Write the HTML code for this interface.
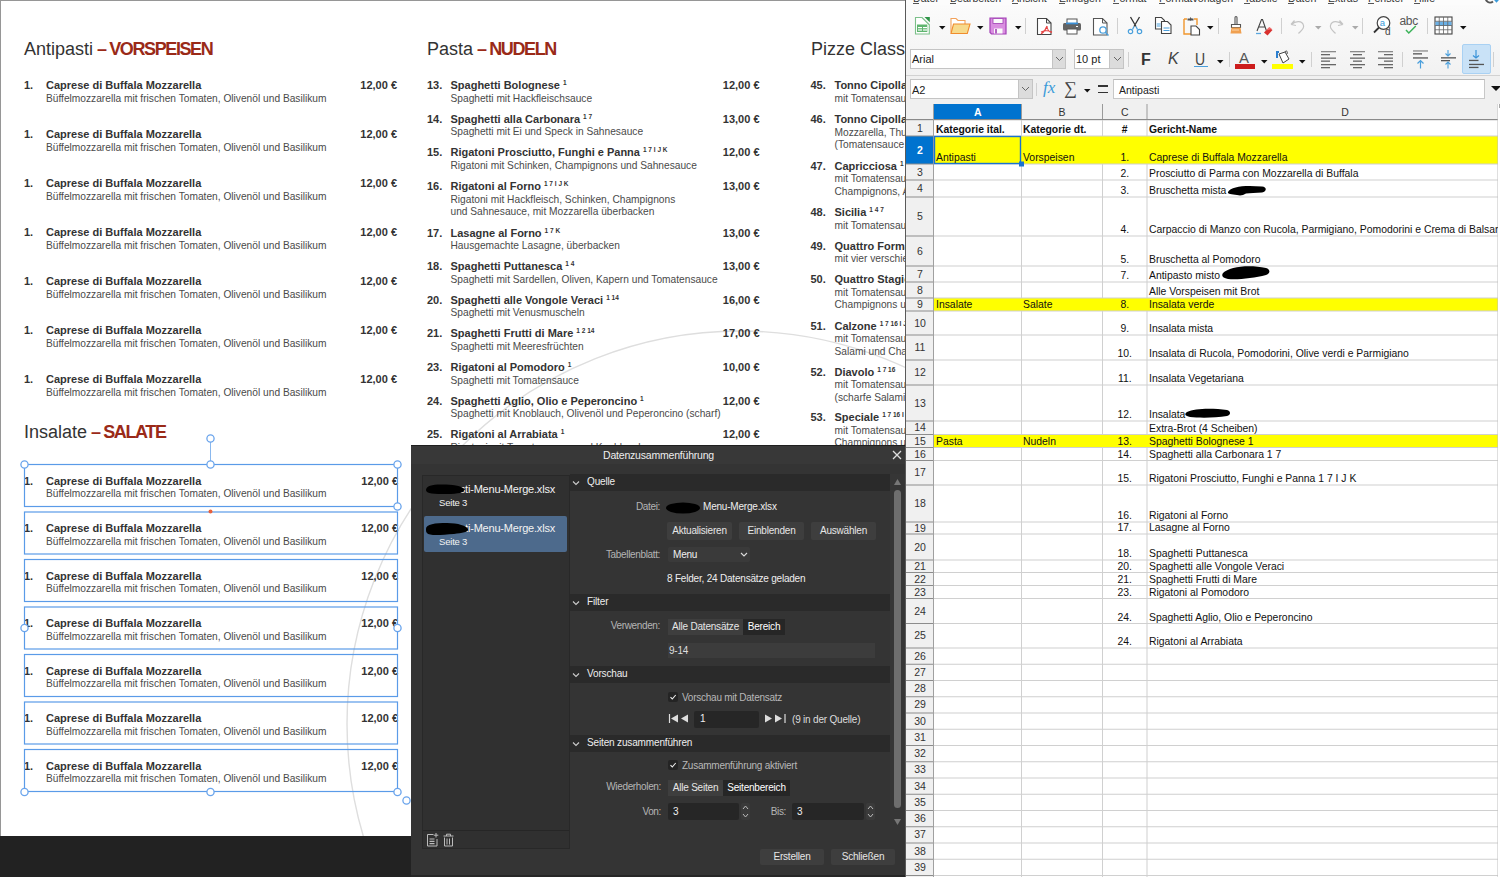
<!DOCTYPE html><html><head><meta charset="utf-8"><style>

*{box-sizing:border-box}
html,body{margin:0;padding:0;width:1500px;height:877px;overflow:hidden;background:#fff;font-family:"Liberation Sans",sans-serif}
.ab{position:absolute;white-space:nowrap}
#doc{position:absolute;left:0;top:0;width:906px;height:877px;background:#222;overflow:hidden}
#page{position:absolute;left:0;top:0;width:1000px;height:836px;background:#fff;border-top:1px solid #969696;border-left:1px solid #969696}
.hd{position:absolute;white-space:nowrap;font-size:18px;line-height:18px;color:#333}
.hd b{color:#9a2a18;font-weight:700;letter-spacing:-1.4px}
.num,.nm,.pr{position:absolute;white-space:nowrap;font-size:11px;line-height:11px;font-weight:700;color:#333}
.ds{position:absolute;white-space:nowrap;font-size:10.2px;line-height:12.5px;color:#4a4a4a}
.nm sup{font-size:6.5px;vertical-align:0;position:relative;top:-4px;font-weight:700;margin-left:3px;letter-spacing:0px}
.pr{text-align:right}

</style></head><body>
<div id="doc"><div id="page"></div>
<svg class="ab" style="left:0;top:0" width="906" height="836"><circle cx="740" cy="724" r="393" fill="none" stroke="#dedede" stroke-width="1.4"/></svg>
<div class="hd" style="left:24px;top:40px">Antipasti<b style="margin-left:4px">– VORSPEISEN</b></div>
<div class="num" style="left:24px;top:80px">1.</div>
<div class="nm" style="left:46px;top:80px">Caprese di Buffala Mozzarella</div>
<div class="ds" style="left:46px;top:92.70px">Büffelmozzarella mit frischen Tomaten, Olivenöl und Basilikum</div>
<div class="pr" style="left:337px;width:60px;top:80px">12,00 €</div>
<div class="num" style="left:24px;top:129px">1.</div>
<div class="nm" style="left:46px;top:129px">Caprese di Buffala Mozzarella</div>
<div class="ds" style="left:46px;top:141.70px">Büffelmozzarella mit frischen Tomaten, Olivenöl und Basilikum</div>
<div class="pr" style="left:337px;width:60px;top:129px">12,00 €</div>
<div class="num" style="left:24px;top:178px">1.</div>
<div class="nm" style="left:46px;top:178px">Caprese di Buffala Mozzarella</div>
<div class="ds" style="left:46px;top:190.70px">Büffelmozzarella mit frischen Tomaten, Olivenöl und Basilikum</div>
<div class="pr" style="left:337px;width:60px;top:178px">12,00 €</div>
<div class="num" style="left:24px;top:227px">1.</div>
<div class="nm" style="left:46px;top:227px">Caprese di Buffala Mozzarella</div>
<div class="ds" style="left:46px;top:239.70px">Büffelmozzarella mit frischen Tomaten, Olivenöl und Basilikum</div>
<div class="pr" style="left:337px;width:60px;top:227px">12,00 €</div>
<div class="num" style="left:24px;top:276px">1.</div>
<div class="nm" style="left:46px;top:276px">Caprese di Buffala Mozzarella</div>
<div class="ds" style="left:46px;top:288.70px">Büffelmozzarella mit frischen Tomaten, Olivenöl und Basilikum</div>
<div class="pr" style="left:337px;width:60px;top:276px">12,00 €</div>
<div class="num" style="left:24px;top:325px">1.</div>
<div class="nm" style="left:46px;top:325px">Caprese di Buffala Mozzarella</div>
<div class="ds" style="left:46px;top:337.70px">Büffelmozzarella mit frischen Tomaten, Olivenöl und Basilikum</div>
<div class="pr" style="left:337px;width:60px;top:325px">12,00 €</div>
<div class="num" style="left:24px;top:374px">1.</div>
<div class="nm" style="left:46px;top:374px">Caprese di Buffala Mozzarella</div>
<div class="ds" style="left:46px;top:386.70px">Büffelmozzarella mit frischen Tomaten, Olivenöl und Basilikum</div>
<div class="pr" style="left:337px;width:60px;top:374px">12,00 €</div>
<div class="hd" style="left:24px;top:423px">Insalate<b style="margin-left:4px">– SALATE</b></div>
<div class="num" style="left:24px;top:475.5px">1.</div>
<div class="nm" style="left:46px;top:475.5px">Caprese di Buffala Mozzarella</div>
<div class="ds" style="left:46px;top:488.20px">Büffelmozzarella mit frischen Tomaten, Olivenöl und Basilikum</div>
<div class="pr" style="left:338px;width:60px;top:475.5px">12,00 €</div>
<div class="num" style="left:24px;top:523.0px">1.</div>
<div class="nm" style="left:46px;top:523.0px">Caprese di Buffala Mozzarella</div>
<div class="ds" style="left:46px;top:535.70px">Büffelmozzarella mit frischen Tomaten, Olivenöl und Basilikum</div>
<div class="pr" style="left:338px;width:60px;top:523.0px">12,00 €</div>
<div class="num" style="left:24px;top:570.5px">1.</div>
<div class="nm" style="left:46px;top:570.5px">Caprese di Buffala Mozzarella</div>
<div class="ds" style="left:46px;top:583.20px">Büffelmozzarella mit frischen Tomaten, Olivenöl und Basilikum</div>
<div class="pr" style="left:338px;width:60px;top:570.5px">12,00 €</div>
<div class="num" style="left:24px;top:618.0px">1.</div>
<div class="nm" style="left:46px;top:618.0px">Caprese di Buffala Mozzarella</div>
<div class="ds" style="left:46px;top:630.70px">Büffelmozzarella mit frischen Tomaten, Olivenöl und Basilikum</div>
<div class="pr" style="left:338px;width:60px;top:618.0px">12,00 €</div>
<div class="num" style="left:24px;top:665.5px">1.</div>
<div class="nm" style="left:46px;top:665.5px">Caprese di Buffala Mozzarella</div>
<div class="ds" style="left:46px;top:678.20px">Büffelmozzarella mit frischen Tomaten, Olivenöl und Basilikum</div>
<div class="pr" style="left:338px;width:60px;top:665.5px">12,00 €</div>
<div class="num" style="left:24px;top:713.0px">1.</div>
<div class="nm" style="left:46px;top:713.0px">Caprese di Buffala Mozzarella</div>
<div class="ds" style="left:46px;top:725.70px">Büffelmozzarella mit frischen Tomaten, Olivenöl und Basilikum</div>
<div class="pr" style="left:338px;width:60px;top:713.0px">12,00 €</div>
<div class="num" style="left:24px;top:760.5px">1.</div>
<div class="nm" style="left:46px;top:760.5px">Caprese di Buffala Mozzarella</div>
<div class="ds" style="left:46px;top:773.20px">Büffelmozzarella mit frischen Tomaten, Olivenöl und Basilikum</div>
<div class="pr" style="left:338px;width:60px;top:760.5px">12,00 €</div>
<div class="hd" style="left:427px;top:40px">Pasta<b style="margin-left:4px">– NUDELN</b></div>
<div class="num" style="left:427px;top:80px">13.</div>
<div class="nm" style="left:450.5px;top:80px">Spaghetti Bolognese<sup>1</sup></div>
<div class="ds" style="left:450.5px;top:92.70px">Spaghetti mit Hackfleischsauce</div>
<div class="pr" style="left:699.5px;width:60px;top:80px">12,00 €</div>
<div class="num" style="left:427px;top:113.5px">14.</div>
<div class="nm" style="left:450.5px;top:113.5px">Spaghetti alla Carbonara<sup>1 7</sup></div>
<div class="ds" style="left:450.5px;top:126.20px">Spaghetti mit Ei und Speck in Sahnesauce</div>
<div class="pr" style="left:699.5px;width:60px;top:113.5px">13,00 €</div>
<div class="num" style="left:427px;top:147px">15.</div>
<div class="nm" style="left:450.5px;top:147px">Rigatoni Prosciutto, Funghi e Panna<sup>1 7 I J K</sup></div>
<div class="ds" style="left:450.5px;top:159.70px">Rigatoni mit Schinken, Champignons und Sahnesauce</div>
<div class="pr" style="left:699.5px;width:60px;top:147px">12,00 €</div>
<div class="num" style="left:427px;top:181px">16.</div>
<div class="nm" style="left:450.5px;top:181px">Rigatoni al Forno<sup>1 7 I J K</sup></div>
<div class="ds" style="left:450.5px;top:193.70px">Rigatoni mit Hackfleisch, Schinken, Champignons</div>
<div class="ds" style="left:450.5px;top:206.20px">und Sahnesauce, mit Mozzarella überbacken</div>
<div class="pr" style="left:699.5px;width:60px;top:181px">13,00 €</div>
<div class="num" style="left:427px;top:227.5px">17.</div>
<div class="nm" style="left:450.5px;top:227.5px">Lasagne al Forno<sup>1 7 K</sup></div>
<div class="ds" style="left:450.5px;top:240.20px">Hausgemachte Lasagne, überbacken</div>
<div class="pr" style="left:699.5px;width:60px;top:227.5px">13,00 €</div>
<div class="num" style="left:427px;top:261px">18.</div>
<div class="nm" style="left:450.5px;top:261px">Spaghetti Puttanesca<sup>1 4</sup></div>
<div class="ds" style="left:450.5px;top:273.70px">Spaghetti mit Sardellen, Oliven, Kapern und Tomatensauce</div>
<div class="pr" style="left:699.5px;width:60px;top:261px">13,00 €</div>
<div class="num" style="left:427px;top:294.5px">20.</div>
<div class="nm" style="left:450.5px;top:294.5px">Spaghetti alle Vongole Veraci<sup>1 14</sup></div>
<div class="ds" style="left:450.5px;top:307.20px">Spaghetti mit Venusmuscheln</div>
<div class="pr" style="left:699.5px;width:60px;top:294.5px">16,00 €</div>
<div class="num" style="left:427px;top:328px">21.</div>
<div class="nm" style="left:450.5px;top:328px">Spaghetti Frutti di Mare<sup>1 2 14</sup></div>
<div class="ds" style="left:450.5px;top:340.70px">Spaghetti mit Meeresfrüchten</div>
<div class="pr" style="left:699.5px;width:60px;top:328px">17,00 €</div>
<div class="num" style="left:427px;top:362px">23.</div>
<div class="nm" style="left:450.5px;top:362px">Rigatoni al Pomodoro<sup>1</sup></div>
<div class="ds" style="left:450.5px;top:374.70px">Spaghetti mit Tomatensauce</div>
<div class="pr" style="left:699.5px;width:60px;top:362px">10,00 €</div>
<div class="num" style="left:427px;top:395.5px">24.</div>
<div class="nm" style="left:450.5px;top:395.5px">Spaghetti Aglio, Olio e Peperoncino<sup>1</sup></div>
<div class="ds" style="left:450.5px;top:408.20px">Spaghetti mit Knoblauch, Olivenöl und Peperoncino (scharf)</div>
<div class="pr" style="left:699.5px;width:60px;top:395.5px">12,00 €</div>
<div class="num" style="left:427px;top:429px">25.</div>
<div class="nm" style="left:450.5px;top:429px">Rigatoni al Arrabiata<sup>1</sup></div>
<div class="ds" style="left:450.5px;top:441.70px">Rigatoni mit Tomatensauce und Knoblauch</div>
<div class="pr" style="left:699.5px;width:60px;top:429px">12,00 €</div>
<div class="hd" style="left:811px;top:40px">Pizze Classiche<b style="margin-left:4px">– KLASSISCHE PIZZEN</b></div>
<div class="num" style="left:810.5px;top:80px">45.</div>
<div class="nm" style="left:834.5px;top:80px">Tonno Cipolla<sup>1 4 7</sup></div>
<div class="ds" style="left:834.5px;top:92.70px">mit Tomatensauce, Mozzarella, Thunfisch und Zwiebeln</div>
<div class="num" style="left:810.5px;top:114px">46.</div>
<div class="nm" style="left:834.5px;top:114px">Tonno Cipolla Bianca<sup>1 4 7</sup></div>
<div class="ds" style="left:834.5px;top:126.70px">Mozzarella, Thunfisch, Zwiebeln</div>
<div class="ds" style="left:834.5px;top:139.20px">(Tomatensauce nach Wunsch)</div>
<div class="num" style="left:810.5px;top:160.5px">47.</div>
<div class="nm" style="left:834.5px;top:160.5px">Capricciosa<sup>1 7 16</sup></div>
<div class="ds" style="left:834.5px;top:173.20px">mit Tomatensauce, Mozzarella, Schinken,</div>
<div class="ds" style="left:834.5px;top:185.70px">Champignons, Artischocken und Oliven</div>
<div class="num" style="left:810.5px;top:207px">48.</div>
<div class="nm" style="left:834.5px;top:207px">Sicilia<sup>1 4 7</sup></div>
<div class="ds" style="left:834.5px;top:219.70px">mit Tomatensauce, Mozzarella, Sardellen</div>
<div class="num" style="left:810.5px;top:240.5px">49.</div>
<div class="nm" style="left:834.5px;top:240.5px">Quattro Formaggi<sup>1 7</sup></div>
<div class="ds" style="left:834.5px;top:253.20px">mit vier verschiedenen Käsesorten</div>
<div class="num" style="left:810.5px;top:274px">50.</div>
<div class="nm" style="left:834.5px;top:274px">Quattro Stagioni<sup>1 7</sup></div>
<div class="ds" style="left:834.5px;top:286.70px">mit Tomatensauce, Mozzarella, Schinken,</div>
<div class="ds" style="left:834.5px;top:299.20px">Champignons und Artischocken</div>
<div class="num" style="left:810.5px;top:320.5px">51.</div>
<div class="nm" style="left:834.5px;top:320.5px">Calzone<sup>1 7 16 I J</sup></div>
<div class="ds" style="left:834.5px;top:333.20px">mit Tomatensauce, Mozzarella, Schinken,</div>
<div class="ds" style="left:834.5px;top:345.70px">Salami und Champignons</div>
<div class="num" style="left:810.5px;top:366.5px">52.</div>
<div class="nm" style="left:834.5px;top:366.5px">Diavolo<sup>1 7 16</sup></div>
<div class="ds" style="left:834.5px;top:379.20px">mit Tomatensauce, Mozzarella,</div>
<div class="ds" style="left:834.5px;top:391.70px">(scharfe Salami und Peperoni)</div>
<div class="num" style="left:810.5px;top:412px">53.</div>
<div class="nm" style="left:834.5px;top:412px">Speciale<sup>1 7 16 I J</sup></div>
<div class="ds" style="left:834.5px;top:424.70px">mit Tomatensauce, Mozzarella, Schinken,</div>
<div class="ds" style="left:834.5px;top:437.20px">Champignons und Salami</div>
<svg class="ab" style="left:0;top:0" width="906" height="877"><rect x="24.5" y="464.5" width="373" height="42" fill="none" stroke="#5a9be8" stroke-width="1.2"/><rect x="24.5" y="512.0" width="373" height="42" fill="none" stroke="#5a9be8" stroke-width="1.2"/><rect x="24.5" y="559.5" width="373" height="42" fill="none" stroke="#5a9be8" stroke-width="1.2"/><rect x="24.5" y="607.0" width="373" height="42" fill="none" stroke="#5a9be8" stroke-width="1.2"/><rect x="24.5" y="654.5" width="373" height="42" fill="none" stroke="#5a9be8" stroke-width="1.2"/><rect x="24.5" y="702.0" width="373" height="42" fill="none" stroke="#5a9be8" stroke-width="1.2"/><rect x="24.5" y="749.5" width="373" height="42" fill="none" stroke="#5a9be8" stroke-width="1.2"/><line x1="210.5" y1="438" x2="210.5" y2="464" stroke="#8ab8ee" stroke-width="1"/><circle cx="24.5" cy="464.5" r="3.6" fill="#fff" stroke="#6aa4ec" stroke-width="1.3"/><circle cx="210.5" cy="464.5" r="3.6" fill="#fff" stroke="#6aa4ec" stroke-width="1.3"/><circle cx="397.5" cy="464.5" r="3.6" fill="#fff" stroke="#6aa4ec" stroke-width="1.3"/><circle cx="210.5" cy="438.5" r="3.6" fill="#fff" stroke="#6aa4ec" stroke-width="1.3"/><circle cx="397.5" cy="506.5" r="3.6" fill="#fff" stroke="#6aa4ec" stroke-width="1.3"/><circle cx="24.5" cy="628" r="3.6" fill="#fff" stroke="#6aa4ec" stroke-width="1.3"/><circle cx="397.5" cy="628" r="3.6" fill="#fff" stroke="#6aa4ec" stroke-width="1.3"/><circle cx="24.5" cy="792" r="3.6" fill="#fff" stroke="#6aa4ec" stroke-width="1.3"/><circle cx="210.5" cy="792" r="3.6" fill="#fff" stroke="#6aa4ec" stroke-width="1.3"/><circle cx="397.5" cy="792" r="3.6" fill="#fff" stroke="#6aa4ec" stroke-width="1.3"/><circle cx="406.5" cy="800.5" r="3.6" fill="#fff" stroke="#6aa4ec" stroke-width="1.3"/><circle cx="210.5" cy="511.5" r="2" fill="#e8603c"/></svg>
</div>
<div id="dlg" style="position:absolute;left:411px;top:445px;width:495px;height:432px;background:#343434;overflow:hidden;font-size:10px;color:#e6e6e6;letter-spacing:-0.2px"><div class="ab" style="left:0;top:0;width:495px;height:1px;background:#1f1f1f"></div><div class="ab" style="left:0;top:1px;width:495px;height:18px;background:#383838"></div><div class="ab" style="left:0;top:4px;width:495px;text-align:center;font-size:10.5px;color:#eee">Datenzusammenführung</div><svg class="ab" style="left:481px;top:5px" width="10" height="10"><path d="M1 1L9 9M9 1L1 9" stroke="#ddd" stroke-width="1.3"/></svg><div class="ab" style="left:11px;top:30px;width:148px;height:374px;background:#303030;border:1px solid #282828"></div><div class="ab" style="left:12px;top:384.5px;width:146px;height:1.5px;background:#262626"></div><div class="ab" style="left:0;top:430px;width:495px;height:2px;background:#262626"></div><div class="ab" style="left:13px;top:71px;width:143px;height:36px;background:#4d6a8c;border-radius:2px"></div><div class="ab" style="left:0px;width:144px;text-align:right;top:38px;font-size:11px;letter-spacing:-0.2px;color:#f2f2f2">Pasti-Menu-Merge.xlsx</div><div class="ab" style="left:28px;top:52px;font-size:9.5px;color:#f2f2f2">Seite 3</div><div class="ab" style="left:0px;width:144px;text-align:right;top:77px;font-size:11px;letter-spacing:-0.2px;color:#f2f2f2">Pasti-Menu-Merge.xlsx</div><div class="ab" style="left:28px;top:91px;font-size:9.5px;color:#f2f2f2">Seite 3</div><svg class="ab" style="left:13px;top:38px" width="50" height="14"><path d="M2 7c0-5 8-6 20-5.5c10 .5 17 2 18 5c1 3-6 4.5-17 4.5C10 11 2 11 2 7z" fill="#000"/></svg><svg class="ab" style="left:14px;top:77px" width="50" height="16"><path d="M1 7c0-5 9-6 21-6c11 0 20 3 21 6c1 3-6 4-14 5C16 13 4 14 2 11c-1-1-1-2-1-4z" fill="#000"/></svg><svg class="ab" style="left:15px;top:387px" width="36" height="16"><path d="M1.5 2.5h6M1.5 2.5v11.5h9.5v-7" fill="none" stroke="#bbb" stroke-width="1"/><path d="M3.5 7h5M3.5 9.3h5M3.5 11.6h5" stroke="#bbb" stroke-width="1.2"/><path d="M10 1v4.5M7.8 3.2h4.5" stroke="#bbb" stroke-width="1"/><path d="M17.5 4h10M20.5 4v-1.8h4v1.8M18.5 5.5v8.5h8v-8.5M21 6.5v6M23.5 6.5v6" fill="none" stroke="#bbb" stroke-width="1"/></svg><div class="ab" style="left:159px;top:29px;width:320px;height:17px;background:#2a2a2a"></div><svg class="ab" style="left:161px;top:35px" width="8" height="6"><path d="M1 1.5L4 4.5L7 1.5" fill="none" stroke="#ccc" stroke-width="1.1"/></svg><div class="ab" style="left:176px;top:31px;font-size:10px;letter-spacing:-0.15px;color:#eee">Quelle</div><div class="ab" style="left:159px;top:149px;width:320px;height:17px;background:#2a2a2a"></div><svg class="ab" style="left:161px;top:155px" width="8" height="6"><path d="M1 1.5L4 4.5L7 1.5" fill="none" stroke="#ccc" stroke-width="1.1"/></svg><div class="ab" style="left:176px;top:151px;font-size:10px;letter-spacing:-0.15px;color:#eee">Filter</div><div class="ab" style="left:159px;top:221px;width:320px;height:17px;background:#2a2a2a"></div><svg class="ab" style="left:161px;top:227px" width="8" height="6"><path d="M1 1.5L4 4.5L7 1.5" fill="none" stroke="#ccc" stroke-width="1.1"/></svg><div class="ab" style="left:176px;top:223px;font-size:10px;letter-spacing:-0.15px;color:#eee">Vorschau</div><div class="ab" style="left:159px;top:290px;width:320px;height:17px;background:#2a2a2a"></div><svg class="ab" style="left:161px;top:296px" width="8" height="6"><path d="M1 1.5L4 4.5L7 1.5" fill="none" stroke="#ccc" stroke-width="1.1"/></svg><div class="ab" style="left:176px;top:292px;font-size:10px;letter-spacing:-0.15px;color:#eee">Seiten zusammenführen</div><div class="ab" style="left:129px;width:120px;text-align:right;top:56px;font-size:10px;letter-spacing:-0.35px;color:#b4b4b4">Datei:</div><svg class="ab" style="left:254px;top:56px" width="40" height="14"><ellipse cx="18" cy="7" rx="17" ry="5.5" fill="#000"/></svg><div class="ab" style="left:292px;top:56px;font-size:10px;color:#eee">Menu-Merge.xlsx</div><div class="ab" style="left:256px;top:77px;width:65px;height:18px;background:#3e3e3e;border-radius:2px;text-align:center;line-height:18px;font-size:10px;color:#e6e6e6">Aktualisieren</div><div class="ab" style="left:328px;top:77px;width:65px;height:18px;background:#3e3e3e;border-radius:2px;text-align:center;line-height:18px;font-size:10px;color:#e6e6e6">Einblenden</div><div class="ab" style="left:400px;top:77px;width:65px;height:18px;background:#3e3e3e;border-radius:2px;text-align:center;line-height:18px;font-size:10px;color:#e6e6e6">Auswählen</div><div class="ab" style="left:129px;width:120px;text-align:right;top:104px;font-size:10px;letter-spacing:-0.35px;color:#b4b4b4">Tabellenblatt:</div><div class="ab" style="left:257px;top:102px;width:82px;height:15px;background:#3a3a3a;border-radius:2px;text-align:center;line-height:15px;font-size:10px;color:#e6e6e6"></div><div class="ab" style="left:262px;top:104px;font-size:10px;color:#f0f0f0">Menu</div><svg class="ab" style="left:329px;top:107px" width="8" height="6"><path d="M1 1L4 4L7 1" fill="none" stroke="#ddd" stroke-width="1.1"/></svg><div class="ab" style="left:256px;top:128px;font-size:10px;color:#eee">8 Felder, 24 Datensätze geladen</div><div class="ab" style="left:129px;width:120px;text-align:right;top:175px;font-size:10px;letter-spacing:-0.35px;color:#b4b4b4">Verwenden:</div><div class="ab" style="left:257px;top:174px;width:75px;height:16px;background:#3e3e3e;border-radius:0px;text-align:center;line-height:16px;font-size:10px;color:#e6e6e6">Alle Datensätze</div><div class="ab" style="left:332px;top:174px;width:42px;height:16px;background:#262626;border-radius:0px;text-align:center;line-height:16px;font-size:10px;color:#fff">Bereich</div><div class="ab" style="left:257px;top:198px;width:207px;height:15px;background:#3c3c3c;border-radius:0px;text-align:center;line-height:15px;font-size:10px;color:#e6e6e6"></div><div class="ab" style="left:258px;top:200px;font-size:10px;color:#ddd">9-14</div><div class="ab" style="left:257px;top:247px;width:10px;height:10px;background:#242424;border-radius:2px"></div><svg class="ab" style="left:257px;top:247px" width="10" height="10"><path d="M2.5 5.2L4.3 7L7.7 3" fill="none" stroke="#eee" stroke-width="1.1"/></svg><div class="ab" style="left:271px;top:247px;font-size:10px;letter-spacing:-0.25px;color:#b8b8b8">Vorschau mit Datensatz</div><svg class="ab" style="left:257px;top:268px" width="24" height="12"><path d="M1.5 1v9" stroke="#ddd" stroke-width="1.2"/><path d="M10 1.5L3 5.5L10 9.5z M20 1.5L13 5.5L20 9.5z" fill="#ddd"/></svg><div class="ab" style="left:283px;top:266px;width:65px;height:17px;background:#262626;border-radius:2px;text-align:center;line-height:17px;font-size:10px;color:#e6e6e6"></div><div class="ab" style="left:289px;top:268px;font-size:10px;color:#eee">1</div><svg class="ab" style="left:352px;top:268px" width="24" height="12"><path d="M22 1v9" stroke="#ddd" stroke-width="1.2"/><path d="M2 1.5L9 5.5L2 9.5z M12 1.5L19 5.5L12 9.5z" fill="#ddd"/></svg><div class="ab" style="left:381px;top:269px;font-size:10px;color:#ddd">(9 in der Quelle)</div><div class="ab" style="left:257px;top:315px;width:10px;height:10px;background:#242424;border-radius:2px"></div><svg class="ab" style="left:257px;top:315px" width="10" height="10"><path d="M2.5 5.2L4.3 7L7.7 3" fill="none" stroke="#eee" stroke-width="1.1"/></svg><div class="ab" style="left:271px;top:315px;font-size:10px;letter-spacing:-0.25px;color:#b8b8b8">Zusammenführung aktiviert</div><div class="ab" style="left:130px;width:120px;text-align:right;top:336px;font-size:10px;letter-spacing:-0.35px;color:#b4b4b4">Wiederholen:</div><div class="ab" style="left:257px;top:335px;width:55px;height:16px;background:#3e3e3e;border-radius:0px;text-align:center;line-height:16px;font-size:10px;color:#e6e6e6">Alle Seiten</div><div class="ab" style="left:312px;top:335px;width:67px;height:16px;background:#262626;border-radius:0px;text-align:center;line-height:16px;font-size:10px;color:#fff">Seitenbereich</div><div class="ab" style="left:130px;width:120px;text-align:right;top:361px;font-size:10px;letter-spacing:-0.35px;color:#b4b4b4">Von:</div><div class="ab" style="left:257px;top:358px;width:71px;height:17px;background:#262626;border-radius:2px;text-align:center;line-height:17px;font-size:10px;color:#e6e6e6"></div><div class="ab" style="left:262px;top:361px;font-size:10px;color:#eee">3</div><div class="ab" style="left:255px;width:120px;text-align:right;top:361px;font-size:10px;letter-spacing:-0.35px;color:#b4b4b4">Bis:</div><div class="ab" style="left:381px;top:358px;width:72px;height:17px;background:#262626;border-radius:2px;text-align:center;line-height:17px;font-size:10px;color:#e6e6e6"></div><div class="ab" style="left:386px;top:361px;font-size:10px;color:#eee">3</div><div class="ab" style="left:330px;top:358px;width:9px;height:17px;background:#3a3a3a;border-radius:2px"></div><svg class="ab" style="left:330px;top:358px" width="9" height="17"><path d="M2 6L4.5 3L7 6M2 11L4.5 14L7 11" fill="none" stroke="#bbb" stroke-width="1"/></svg><div class="ab" style="left:455px;top:358px;width:9px;height:17px;background:#3a3a3a;border-radius:2px"></div><svg class="ab" style="left:455px;top:358px" width="9" height="17"><path d="M2 6L4.5 3L7 6M2 11L4.5 14L7 11" fill="none" stroke="#bbb" stroke-width="1"/></svg><div class="ab" style="left:479px;top:29px;width:15px;height:356px;background:#363636"></div><svg class="ab" style="left:482px;top:33px" width="9" height="8"><path d="M1 7L4.5 1L8 7z" fill="#777"/></svg><div class="ab" style="left:483px;top:45px;width:7px;height:318px;background:#6e6e6e;border-radius:4px"></div><svg class="ab" style="left:482px;top:373px" width="9" height="8"><path d="M1 1L4.5 7L8 1z" fill="#777"/></svg><div class="ab" style="left:349px;top:404px;width:64px;height:16px;background:#3e3e3e;border-radius:2px;text-align:center;line-height:16px;font-size:10px;color:#e6e6e6">Erstellen</div><div class="ab" style="left:420px;top:404px;width:64px;height:16px;background:#3e3e3e;border-radius:2px;text-align:center;line-height:16px;font-size:10px;color:#e6e6e6">Schließen</div></div>
<div id="sh" style="position:absolute;left:905px;top:0;width:595px;height:877px;background:#f7f7f7;overflow:hidden"><div class="ab" style="left:0;top:0;width:1px;height:877px;background:#5a5a5a"></div><div class="ab" style="left:1px;top:0px;width:594px;height:5px;background:#fcfcfc"></div><div class="ab" style="left:1px;top:5px;width:594px;height:70px;background:linear-gradient(#fbfbfb,#f2f2f2)"></div><div class="ab" style="left:1px;top:75px;width:594px;height:1px;background:#d2d2d2"></div><div class="ab" style="left:1px;top:76px;width:594px;height:28px;background:#f0f0f0"></div><div class="ab" style="left:8px;top:-8.5px;font-size:10.6px;line-height:12px;color:#333">Datei</div><div class="ab" style="left:8px;top:2.5px;width:6px;height:1px;background:#555"></div><div class="ab" style="left:45px;top:-8.5px;font-size:10.6px;line-height:12px;color:#333">Bearbeiten</div><div class="ab" style="left:45px;top:2.5px;width:6px;height:1px;background:#555"></div><div class="ab" style="left:107px;top:-8.5px;font-size:10.6px;line-height:12px;color:#333">Ansicht</div><div class="ab" style="left:107px;top:2.5px;width:6px;height:1px;background:#555"></div><div class="ab" style="left:154px;top:-8.5px;font-size:10.6px;line-height:12px;color:#333">Einfügen</div><div class="ab" style="left:154px;top:2.5px;width:6px;height:1px;background:#555"></div><div class="ab" style="left:208px;top:-8.5px;font-size:10.6px;line-height:12px;color:#333">Format</div><div class="ab" style="left:208px;top:2.5px;width:6px;height:1px;background:#555"></div><div class="ab" style="left:254px;top:-8.5px;font-size:10.6px;line-height:12px;color:#333">Formatvorlagen</div><div class="ab" style="left:254px;top:2.5px;width:6px;height:1px;background:#555"></div><div class="ab" style="left:339px;top:-8.5px;font-size:10.6px;line-height:12px;color:#333">Tabelle</div><div class="ab" style="left:339px;top:2.5px;width:6px;height:1px;background:#555"></div><div class="ab" style="left:383px;top:-8.5px;font-size:10.6px;line-height:12px;color:#333">Daten</div><div class="ab" style="left:383px;top:2.5px;width:6px;height:1px;background:#555"></div><div class="ab" style="left:423px;top:-8.5px;font-size:10.6px;line-height:12px;color:#333">Extras</div><div class="ab" style="left:423px;top:2.5px;width:6px;height:1px;background:#555"></div><div class="ab" style="left:463px;top:-8.5px;font-size:10.6px;line-height:12px;color:#333">Fenster</div><div class="ab" style="left:463px;top:2.5px;width:6px;height:1px;background:#555"></div><div class="ab" style="left:509px;top:-8.5px;font-size:10.6px;line-height:12px;color:#333">Hilfe</div><div class="ab" style="left:509px;top:2.5px;width:6px;height:1px;background:#555"></div><svg class="ab" style="left:9px;top:16px" width="17" height="19" viewBox="0 0 17 19"><path d="M1.5 1.5h6.5l7.3 7.3v9.2H1.5z" fill="#fff" stroke="#7cc08a" stroke-width="1.1"/><path d="M8 1.5L15.3 8.8" stroke="#8fcb9b" stroke-width="1"/><path d="M10.5 1h5.3v5.3z" fill="#2e9447"/><rect x="3" y="8.5" width="10.3" height="7.5" fill="#5fb56f"/><rect x="4" y="11" width="4" height="1.2" fill="#fff"/><rect x="9" y="11" width="4" height="1.2" fill="#fff"/><rect x="4" y="13.4" width="4" height="1.2" fill="#fff"/><rect x="9" y="13.4" width="4" height="1.2" fill="#fff"/></svg><svg class="ab" style="left:34px;top:26px" width="7" height="4" viewBox="0 0 7 4"><path d="M0 0H6.5L3.25 3.5z" fill="#111"/></svg><svg class="ab" style="left:45px;top:17px" width="21" height="18" viewBox="0 0 21 18"><path d="M1 15.5V1.5h5l2 2h7v4" fill="#fff" stroke="#f3a25a" stroke-width="1.1"/><path d="M1 16.5L3.5 7h16.5l-2.7 9.5z" fill="#f7da8c" stroke="#f08c2d" stroke-width="1.1"/></svg><svg class="ab" style="left:72px;top:26px" width="7" height="4" viewBox="0 0 7 4"><path d="M0 0H6.5L3.25 3.5z" fill="#111"/></svg><svg class="ab" style="left:84px;top:17px" width="18" height="18" viewBox="0 0 18 18"><path d="M1 1h16v16H2.5L1 15.5z" fill="#d98fe0" stroke="#a23fb5" stroke-width="1.2"/><rect x="4" y="1.6" width="10" height="4.8" fill="#fafafa" stroke="#a23fb5" stroke-width="0.8"/><rect x="5" y="11.5" width="8.5" height="5" fill="#fafafa"/><rect x="6.2" y="12" width="1.6" height="4.5" fill="#a23fb5"/></svg><svg class="ab" style="left:110px;top:26px" width="7" height="4" viewBox="0 0 7 4"><path d="M0 0H6.5L3.25 3.5z" fill="#111"/></svg><div class="ab" style="left:120px;top:18px;width:1px;height:16px;background:#d0d0d0"></div><svg class="ab" style="left:131px;top:17px" width="18" height="19" viewBox="0 0 18 19"><path d="M1.5 1.5h9l4.5 4.5v11.5h-13.5z" fill="#fff" stroke="#444" stroke-width="1.1"/><path d="M10.5 1.5v4.5h4.5" fill="none" stroke="#444" stroke-width="1"/><path d="M11 9c-1 3-3 6-6 8M11 9c0 3 2 6 5 6.5M5 15c3-1.5 7-1.8 11 0" fill="none" stroke="#e64545" stroke-width="1.1"/></svg><svg class="ab" style="left:157px;top:18px" width="20" height="17" viewBox="0 0 20 17"><rect x="5" y="1" width="10" height="5" fill="#fff" stroke="#555" stroke-width="1"/><rect x="1" y="5" width="18" height="7.5" rx="1.5" fill="#646464"/><rect x="4" y="4.5" width="12" height="1.8" fill="#3b8fd6"/><rect x="5" y="11" width="10" height="5" fill="#fff" stroke="#555" stroke-width="1"/><rect x="14" y="8" width="2" height="1" fill="#fff"/></svg><svg class="ab" style="left:187px;top:17px" width="20" height="20" viewBox="0 0 20 20"><path d="M1.5 1.5h9l4.5 4.5v12h-13.5z" fill="#fff" stroke="#555" stroke-width="1.1"/><path d="M10.5 1.5v4.5h4.5" fill="none" stroke="#555" stroke-width="1"/><circle cx="11" cy="13" r="3.2" fill="#fff" stroke="#4a9fdc" stroke-width="1.3"/><path d="M13.3 15.3L16.5 18.5" stroke="#4a9fdc" stroke-width="1.4"/></svg><div class="ab" style="left:212px;top:18px;width:1px;height:16px;background:#d0d0d0"></div><svg class="ab" style="left:221px;top:16px" width="18" height="19" viewBox="0 0 18 19"><path d="M4.5 1L10 10.5M13.5 1L8 10.5" stroke="#333" stroke-width="1.3"/><path d="M8 10.5L6.5 13.5M10 10.5L11.5 13.5" stroke="#4aa0dc" stroke-width="1.3"/><circle cx="4.5" cy="15.5" r="2.2" fill="none" stroke="#4aa0dc" stroke-width="1.2"/><circle cx="13.5" cy="15.5" r="2.2" fill="none" stroke="#4aa0dc" stroke-width="1.2"/></svg><svg class="ab" style="left:249px;top:16px" width="19" height="19" viewBox="0 0 19 19"><path d="M1.5 1.5h6l3 3v8.5h-9z" fill="#fff" stroke="#444" stroke-width="1.1"/><path d="M7.5 5.5h6l3.5 3.5v8.5h-9.5z" fill="#fff" stroke="#444" stroke-width="1.1"/><path d="M2.7 8h4M2.7 10h4M9.5 12h6M9.5 14.5h6" stroke="#4a9fdc" stroke-width="1.1"/></svg><svg class="ab" style="left:277px;top:16px" width="19" height="20" viewBox="0 0 19 20"><path d="M2 3h3M12 3h3v6M2 3v15h7" fill="none" stroke="#f0962e" stroke-width="1.4"/><path d="M5.5 2.5h6v2h-6z" fill="#555"/><path d="M8.5 4.5c0-1.5 1-2.5 0-3" stroke="#555" stroke-width="1"/><path d="M9 10h5l3.5 3.5v5.5h-8.5z" fill="#fff" stroke="#444" stroke-width="1.1"/></svg><svg class="ab" style="left:302px;top:26px" width="7" height="4" viewBox="0 0 7 4"><path d="M0 0H6.5L3.25 3.5z" fill="#111"/></svg><div class="ab" style="left:313px;top:18px;width:1px;height:16px;background:#d0d0d0"></div><svg class="ab" style="left:324px;top:15px" width="14" height="20" viewBox="0 0 14 20"><path d="M6 9V2.5a1 1 0 0 1 2 0V9" fill="none" stroke="#555" stroke-width="1.1"/><path d="M2.5 9.5h9v3h-9z" fill="#fff" stroke="#555" stroke-width="1.1"/><path d="M2.5 12.5h9l1 6h-11z" fill="#f0a050"/><path d="M3 15h7" stroke="#fbd5a8" stroke-width="1"/></svg><svg class="ab" style="left:350px;top:18px" width="19" height="18" viewBox="0 0 19 18"><path d="M2 13L6.5 1.5h1L11.5 13M4 9h6" fill="none" stroke="#444" stroke-width="1.1"/><path d="M1 15.5h5" stroke="#5aa7df" stroke-width="1.3"/><path d="M9 14.5l5-5 3.5 2.5-5 5.5z" fill="#d9302e"/><path d="M11 12.5l3.5-3.5 2.5 2" fill="#f07070"/></svg><div class="ab" style="left:376px;top:18px;width:1px;height:16px;background:#d0d0d0"></div><svg class="ab" style="left:384px;top:17px" width="18" height="17" viewBox="0 0 18 17"><path d="M2 7.5l3.5-4M2 7.5l5 1M2.5 7.5c4-4 11-4 12 1c1 3-2 5-5 8" fill="none" stroke="#c4c4c4" stroke-width="1.2"/></svg><svg class="ab" style="left:410px;top:26px" width="7" height="4" viewBox="0 0 7 4"><path d="M0 0H6.5L3.25 3.5z" fill="#aaa"/></svg><svg class="ab" style="left:422px;top:17px" width="18" height="17" viewBox="0 0 18 17"><path d="M16 7.5l-3.5-4M16 7.5l-5 1M15.5 7.5c-4-4-11-4-12 1c-1 3 2 5 5 8" fill="none" stroke="#c4c4c4" stroke-width="1.2"/></svg><svg class="ab" style="left:447px;top:26px" width="7" height="4" viewBox="0 0 7 4"><path d="M0 0H6.5L3.25 3.5z" fill="#aaa"/></svg><div class="ab" style="left:457px;top:18px;width:1px;height:16px;background:#d0d0d0"></div><svg class="ab" style="left:467px;top:15px" width="21" height="21" viewBox="0 0 21 21"><circle cx="11.5" cy="8" r="6.3" fill="#fff" stroke="#444" stroke-width="1.2"/><path d="M7 12.5L2 17.5" stroke="#333" stroke-width="1.8"/><text x="7.8" y="11" font-size="9.5" fill="#3a9ad9" font-family="Liberation Sans">a</text><text x="13" y="19.5" font-size="10" fill="#444" font-family="Liberation Sans">d</text></svg><svg class="ab" style="left:494px;top:15px" width="22" height="21" viewBox="0 0 22 21"><text x="0.5" y="10" font-size="12" fill="#555" font-family="Liberation Sans" letter-spacing="-0.3">abc</text><path d="M7 15l2.8 3l7-7" fill="none" stroke="#3cb35a" stroke-width="1.5"/></svg><div class="ab" style="left:522px;top:18px;width:1px;height:16px;background:#d0d0d0"></div><svg class="ab" style="left:529px;top:16px" width="20" height="19" viewBox="0 0 20 19"><rect x="1" y="1" width="17" height="17" fill="#fff" stroke="#444" stroke-width="1.1"/><rect x="1.5" y="5.5" width="16" height="4.5" fill="#6ab0e6"/><path d="M5.25 1v17M9.5 1v17M13.75 1v17M1 5.25h17M1 9.5h17M1 13.75h17" stroke="#666" stroke-width="0.8"/></svg><svg class="ab" style="left:555px;top:26px" width="7" height="4" viewBox="0 0 7 4"><path d="M0 0H6.5L3.25 3.5z" fill="#111"/></svg><svg class="ab" style="left:579px;top:-7px" width="17" height="11" viewBox="0 0 17 11"><path d="M9 1.5A4.5 4.5 0 1 0 9 8.5" fill="none" stroke="#555" stroke-width="2"/><path d="M12.5 0v8M9.8 5.5l2.7 3 2.7-3" fill="none" stroke="#3a9ad9" stroke-width="1.6"/></svg><div class="ab" style="left:5px;top:49px;width:156px;height:20px;background:#fff;border:1px solid #c4c4c4"></div><div class="ab" style="left:147px;top:49px;width:14px;height:20px;background:#dcdcdc;border:1px solid #c4c4c4"></div><svg class="ab" style="left:150.0px;top:56.0px" width="9" height="6" viewBox="0 0 9 6"><path d="M1 1L4.5 4.5L8 1" fill="none" stroke="#666" stroke-width="1"/></svg><div class="ab" style="left:7px;top:53px;font-size:11px;line-height:12px;color:#222">Arial</div><div class="ab" style="left:169px;top:49px;width:50px;height:20px;background:#fff;border:1px solid #c4c4c4"></div><div class="ab" style="left:204px;top:49px;width:15px;height:20px;background:#dcdcdc;border:1px solid #c4c4c4"></div><svg class="ab" style="left:207.5px;top:56.0px" width="9" height="6" viewBox="0 0 9 6"><path d="M1 1L4.5 4.5L8 1" fill="none" stroke="#666" stroke-width="1"/></svg><div class="ab" style="left:171px;top:53px;font-size:11px;line-height:12px;color:#222">10 pt</div><div class="ab" style="left:223px;top:52px;width:1px;height:15px;background:#d0d0d0"></div><div class="ab" style="left:236px;top:51px;font-size:16px;line-height:18px;font-weight:700;color:#333">F</div><div class="ab" style="left:263px;top:50px;font-size:16px;line-height:18px;font-style:italic;color:#444">K</div><div class="ab" style="left:289.5px;top:50px;font-size:16.5px;line-height:18px;color:#444;transform:scaleX(0.85);transform-origin:left">U</div><div class="ab" style="left:289px;top:66px;width:14px;height:1px;background:#4a9fdc"></div><svg class="ab" style="left:312px;top:60px" width="7" height="4" viewBox="0 0 7 4"><path d="M0 0H6.5L3.25 3.5z" fill="#111"/></svg><div class="ab" style="left:324px;top:52px;width:1px;height:15px;background:#d0d0d0"></div><div class="ab" style="left:334px;top:49.5px;font-size:15px;line-height:16px;color:#555">A</div><div class="ab" style="left:330px;top:64px;width:20px;height:5px;background:#cc1c1c"></div><svg class="ab" style="left:356px;top:60px" width="7" height="4" viewBox="0 0 7 4"><path d="M0 0H6.5L3.25 3.5z" fill="#111"/></svg><svg class="ab" style="left:369px;top:50px" width="16" height="14" viewBox="0 0 16 14"><path d="M3 8V2h2" fill="none" stroke="#2b7fd0" stroke-width="2"/><path d="M5 4l6-2 4 7-6 4z" fill="#fff" stroke="#444" stroke-width="1"/><path d="M11 2c1-2 3-1 2 2" fill="none" stroke="#444" stroke-width="1"/></svg><div class="ab" style="left:367px;top:64px;width:21px;height:5px;background:#ffff00"></div><svg class="ab" style="left:394px;top:60px" width="7" height="4" viewBox="0 0 7 4"><path d="M0 0H6.5L3.25 3.5z" fill="#111"/></svg><div class="ab" style="left:406px;top:52px;width:1px;height:15px;background:#d0d0d0"></div><svg class="ab" style="left:416px;top:50px" width="16" height="19" viewBox="0 0 16 19"><rect x="0" y="1" width="15" height="1.3" fill="#8a8a8a"/><rect x="0" y="4" width="9" height="1.3" fill="#666"/><rect x="0" y="7.5" width="15" height="1.3" fill="#666"/><rect x="0" y="10.5" width="9" height="1.3" fill="#666"/><rect x="0" y="14" width="15" height="1.3" fill="#666"/><rect x="0" y="17" width="9" height="1.3" fill="#666"/></svg><svg class="ab" style="left:445px;top:50px" width="16" height="19" viewBox="0 0 16 19"><rect x="0.0" y="1" width="15" height="1.3" fill="#8a8a8a"/><rect x="3.0" y="4" width="9" height="1.3" fill="#666"/><rect x="0.0" y="7.5" width="15" height="1.3" fill="#666"/><rect x="3.0" y="10.5" width="9" height="1.3" fill="#666"/><rect x="0.0" y="14" width="15" height="1.3" fill="#666"/><rect x="3.0" y="17" width="9" height="1.3" fill="#666"/></svg><svg class="ab" style="left:473px;top:50px" width="16" height="19" viewBox="0 0 16 19"><rect x="0" y="1" width="15" height="1.3" fill="#8a8a8a"/><rect x="6" y="4" width="9" height="1.3" fill="#666"/><rect x="0" y="7.5" width="15" height="1.3" fill="#666"/><rect x="6" y="10.5" width="9" height="1.3" fill="#666"/><rect x="0" y="14" width="15" height="1.3" fill="#666"/><rect x="6" y="17" width="9" height="1.3" fill="#666"/></svg><div class="ab" style="left:497px;top:52px;width:1px;height:15px;background:#d0d0d0"></div><svg class="ab" style="left:507px;top:49px" width="16" height="20" viewBox="0 0 16 20"><rect x="1" y="1.2" width="15" height="1.5" fill="#999"/><rect x="1" y="4.2" width="9" height="1.3" fill="#555"/><rect x="1" y="8.3" width="15" height="1.3" fill="#555"/><path d="M8.5 19.5V11.5M5.5 14.5l3-3 3 3" fill="none" stroke="#4a9fdc" stroke-width="1.2"/></svg><svg class="ab" style="left:535px;top:49px" width="16" height="20" viewBox="0 0 16 20"><path d="M8 1v6M5.5 4.5L8 7l2.5-2.5" fill="none" stroke="#4a9fdc" stroke-width="1.1"/><rect x="1" y="8.2" width="15" height="1.3" fill="#555"/><rect x="1" y="11" width="9" height="1.3" fill="#555"/><path d="M8 19.5V13M5.5 15.5L8 13l2.5 2.5" fill="none" stroke="#4a9fdc" stroke-width="1.1"/></svg><div class="ab" style="left:557px;top:44px;width:29px;height:30px;background:#c9e2f7;border:1px solid #a9d1f3;border-radius:2px"></div><svg class="ab" style="left:563px;top:49px" width="16" height="20" viewBox="0 0 16 20"><path d="M8 1v8M5 6.5l3 2.5 3-2.5" fill="none" stroke="#3a93d8" stroke-width="1.2"/><rect x="1" y="10.8" width="9.5" height="1.3" fill="#555"/><rect x="1" y="14.8" width="15" height="1.3" fill="#555"/><rect x="1" y="17.8" width="9.5" height="1.3" fill="#555"/></svg><div class="ab" style="left:588px;top:52px;width:1px;height:15px;background:#d0d0d0"></div><div class="ab" style="left:5px;top:79px;width:123px;height:20px;background:#fff;border:1px solid #c4c4c4"></div><div class="ab" style="left:113px;top:79px;width:15px;height:20px;background:#dcdcdc;border:1px solid #c4c4c4"></div><svg class="ab" style="left:116px;top:86px" width="9" height="6" viewBox="0 0 9 6"><path d="M1 1L4.5 4.5L8 1" fill="none" stroke="#666" stroke-width="1"/></svg><div class="ab" style="left:7px;top:84px;font-size:11px;line-height:12px;color:#222">A2</div><div class="ab" style="left:131px;top:83px;width:1px;height:13px;background:#d0d0d0"></div><div class="ab" style="left:138px;top:79px;font-family:'Liberation Serif';font-style:italic;font-size:17px;line-height:18px;color:#3a9ad9">fx</div><div class="ab" style="left:159px;top:78px;font-family:'Liberation Serif';font-size:18px;line-height:20px;color:#444">&#8721;</div><svg class="ab" style="left:179px;top:89px" width="7" height="4" viewBox="0 0 7 4"><path d="M0 0H6.5L3.25 3.5z" fill="#111"/></svg><div class="ab" style="left:193px;top:85px;width:10px;height:1.8px;background:#333"></div><div class="ab" style="left:193px;top:91.5px;width:10px;height:1.8px;background:#333"></div><div class="ab" style="left:208px;top:79px;width:372px;height:20px;background:#fff;border:1px solid #c8c8c8;border-top-color:#b8b8b8"></div><div class="ab" style="left:214px;top:84px;font-size:10.5px;line-height:12px;color:#222">Antipasti</div><svg class="ab" style="left:586px;top:85.5px" width="10" height="6" viewBox="0 0 10 6"><path d="M0 0H10L5 5z" fill="#111"/></svg><svg class="ab" style="left:0;top:0" width="595" height="877"><rect x="1" y="104" width="594" height="16" fill="#f0f0f0"/><rect x="29" y="104" width="87.5" height="16" fill="#0073cf"/><rect x="29" y="120" width="564" height="757" fill="#fff"/><rect x="1" y="120" width="28" height="757" fill="#f0f0f0"/><rect x="1" y="136" width="28" height="28" fill="#0073cf"/><rect x="29" y="136" width="564" height="28" fill="#ffff00"/><rect x="29" y="298" width="564" height="13" fill="#ffff00"/><rect x="29" y="434.5" width="564" height="13.0" fill="#ffff00"/><rect x="116.0" y="104" width="1" height="16" fill="#9a9a9a"/><rect x="197.0" y="104" width="1" height="16" fill="#9a9a9a"/><rect x="241.5" y="104" width="1" height="16" fill="#9a9a9a"/><rect x="1" y="119" width="594" height="1.2" fill="#8a8a8a"/><rect x="1" y="135.5" width="28" height="1" fill="#8c8c8c"/><rect x="29" y="135.5" width="564" height="1" fill="#d0d0d0"/><rect x="1" y="163.5" width="28" height="1" fill="#8c8c8c"/><rect x="29" y="163.5" width="564" height="1" fill="#d0d0d0"/><rect x="1" y="179.5" width="28" height="1" fill="#8c8c8c"/><rect x="29" y="179.5" width="564" height="1" fill="#d0d0d0"/><rect x="1" y="196.5" width="28" height="1" fill="#8c8c8c"/><rect x="29" y="196.5" width="564" height="1" fill="#d0d0d0"/><rect x="1" y="235.5" width="28" height="1" fill="#8c8c8c"/><rect x="29" y="235.5" width="564" height="1" fill="#d0d0d0"/><rect x="1" y="265.5" width="28" height="1" fill="#8c8c8c"/><rect x="29" y="265.5" width="564" height="1" fill="#d0d0d0"/><rect x="1" y="281.5" width="28" height="1" fill="#8c8c8c"/><rect x="29" y="281.5" width="564" height="1" fill="#d0d0d0"/><rect x="1" y="297.5" width="28" height="1" fill="#8c8c8c"/><rect x="29" y="297.5" width="564" height="1" fill="#d0d0d0"/><rect x="1" y="310.5" width="28" height="1" fill="#8c8c8c"/><rect x="29" y="310.5" width="564" height="1" fill="#d0d0d0"/><rect x="1" y="334.5" width="28" height="1" fill="#8c8c8c"/><rect x="29" y="334.5" width="564" height="1" fill="#d0d0d0"/><rect x="1" y="359.5" width="28" height="1" fill="#8c8c8c"/><rect x="29" y="359.5" width="564" height="1" fill="#d0d0d0"/><rect x="1" y="384.5" width="28" height="1" fill="#8c8c8c"/><rect x="29" y="384.5" width="564" height="1" fill="#d0d0d0"/><rect x="1" y="420.5" width="28" height="1" fill="#8c8c8c"/><rect x="29" y="420.5" width="564" height="1" fill="#d0d0d0"/><rect x="1" y="434.0" width="28" height="1" fill="#8c8c8c"/><rect x="29" y="434.0" width="564" height="1" fill="#d0d0d0"/><rect x="1" y="447.0" width="28" height="1" fill="#8c8c8c"/><rect x="29" y="447.0" width="564" height="1" fill="#d0d0d0"/><rect x="1" y="460.0" width="28" height="1" fill="#8c8c8c"/><rect x="29" y="460.0" width="564" height="1" fill="#d0d0d0"/><rect x="1" y="484.5" width="28" height="1" fill="#8c8c8c"/><rect x="29" y="484.5" width="564" height="1" fill="#d0d0d0"/><rect x="1" y="521.5" width="28" height="1" fill="#8c8c8c"/><rect x="29" y="521.5" width="564" height="1" fill="#d0d0d0"/><rect x="1" y="533.5" width="28" height="1" fill="#8c8c8c"/><rect x="29" y="533.5" width="564" height="1" fill="#d0d0d0"/><rect x="1" y="559.5" width="28" height="1" fill="#8c8c8c"/><rect x="29" y="559.5" width="564" height="1" fill="#d0d0d0"/><rect x="1" y="572.0" width="28" height="1" fill="#8c8c8c"/><rect x="29" y="572.0" width="564" height="1" fill="#d0d0d0"/><rect x="1" y="585.0" width="28" height="1" fill="#8c8c8c"/><rect x="29" y="585.0" width="564" height="1" fill="#d0d0d0"/><rect x="1" y="598.0" width="28" height="1" fill="#8c8c8c"/><rect x="29" y="598.0" width="564" height="1" fill="#d0d0d0"/><rect x="1" y="623.0" width="28" height="1" fill="#8c8c8c"/><rect x="29" y="623.0" width="564" height="1" fill="#d0d0d0"/><rect x="1" y="647.5" width="28" height="1" fill="#8c8c8c"/><rect x="29" y="647.5" width="564" height="1" fill="#d0d0d0"/><rect x="1" y="663.75" width="28" height="1" fill="#8c8c8c"/><rect x="29" y="663.75" width="564" height="1" fill="#d0d0d0"/><rect x="1" y="680.0" width="28" height="1" fill="#8c8c8c"/><rect x="29" y="680.0" width="564" height="1" fill="#d0d0d0"/><rect x="1" y="696.25" width="28" height="1" fill="#8c8c8c"/><rect x="29" y="696.25" width="564" height="1" fill="#d0d0d0"/><rect x="1" y="712.5" width="28" height="1" fill="#8c8c8c"/><rect x="29" y="712.5" width="564" height="1" fill="#d0d0d0"/><rect x="1" y="728.75" width="28" height="1" fill="#8c8c8c"/><rect x="29" y="728.75" width="564" height="1" fill="#d0d0d0"/><rect x="1" y="745.0" width="28" height="1" fill="#8c8c8c"/><rect x="29" y="745.0" width="564" height="1" fill="#d0d0d0"/><rect x="1" y="761.25" width="28" height="1" fill="#8c8c8c"/><rect x="29" y="761.25" width="564" height="1" fill="#d0d0d0"/><rect x="1" y="777.5" width="28" height="1" fill="#8c8c8c"/><rect x="29" y="777.5" width="564" height="1" fill="#d0d0d0"/><rect x="1" y="793.75" width="28" height="1" fill="#8c8c8c"/><rect x="29" y="793.75" width="564" height="1" fill="#d0d0d0"/><rect x="1" y="810.0" width="28" height="1" fill="#8c8c8c"/><rect x="29" y="810.0" width="564" height="1" fill="#d0d0d0"/><rect x="1" y="826.25" width="28" height="1" fill="#8c8c8c"/><rect x="29" y="826.25" width="564" height="1" fill="#d0d0d0"/><rect x="1" y="842.5" width="28" height="1" fill="#8c8c8c"/><rect x="29" y="842.5" width="564" height="1" fill="#d0d0d0"/><rect x="1" y="858.75" width="28" height="1" fill="#8c8c8c"/><rect x="29" y="858.75" width="564" height="1" fill="#d0d0d0"/><rect x="1" y="875.0" width="28" height="1" fill="#8c8c8c"/><rect x="29" y="875.0" width="564" height="1" fill="#d0d0d0"/><rect x="1" y="891.25" width="28" height="1" fill="#8c8c8c"/><rect x="29" y="891.25" width="564" height="1" fill="#d0d0d0"/><rect x="116.0" y="120" width="1" height="16" fill="#d0d0d0"/><rect x="116.0" y="164" width="1" height="134" fill="#d0d0d0"/><rect x="116.0" y="311" width="1" height="123.5" fill="#d0d0d0"/><rect x="116.0" y="447.5" width="1" height="429.5" fill="#d0d0d0"/><rect x="197.0" y="120" width="1" height="16" fill="#d0d0d0"/><rect x="197.0" y="164" width="1" height="134" fill="#d0d0d0"/><rect x="197.0" y="311" width="1" height="123.5" fill="#d0d0d0"/><rect x="197.0" y="447.5" width="1" height="429.5" fill="#d0d0d0"/><rect x="241.5" y="120" width="1" height="16" fill="#d0d0d0"/><rect x="241.5" y="164" width="1" height="134" fill="#d0d0d0"/><rect x="241.5" y="311" width="1" height="123.5" fill="#d0d0d0"/><rect x="241.5" y="447.5" width="1" height="429.5" fill="#d0d0d0"/><rect x="28" y="104" width="1" height="773" fill="#a0a0a0"/><rect x="592.5" y="104" width="1" height="773" fill="#c0c0c0"/><rect x="29.5" y="136.5" width="86.0" height="27" fill="none" stroke="#1a73d0" stroke-width="1.4"/><rect x="114.0" y="161.5" width="5" height="5" fill="#1a73d0"/></svg><div class="ab" style="left:32.75px;width:80px;text-align:center;top:106px;font-size:10.5px;line-height:12px;color:#fff;font-weight:700">A</div><div class="ab" style="left:117px;width:80px;text-align:center;top:106px;font-size:10.5px;line-height:12px;color:#333;font-weight:400">B</div><div class="ab" style="left:179.75px;width:80px;text-align:center;top:106px;font-size:10.5px;line-height:12px;color:#333;font-weight:400">C</div><div class="ab" style="left:400px;width:80px;text-align:center;top:106px;font-size:10.5px;line-height:12px;color:#333;font-weight:400">D</div><div class="ab" style="left:-25px;width:80px;text-align:center;top:121.5px;font-size:10.5px;line-height:12px;color:#333;font-weight:400">1</div><div class="ab" style="left:-25px;width:80px;text-align:center;top:143.5px;font-size:10.5px;line-height:12px;color:#fff;font-weight:700">2</div><div class="ab" style="left:-25px;width:80px;text-align:center;top:165.5px;font-size:10.5px;line-height:12px;color:#333;font-weight:400">3</div><div class="ab" style="left:-25px;width:80px;text-align:center;top:182.0px;font-size:10.5px;line-height:12px;color:#333;font-weight:400">4</div><div class="ab" style="left:-25px;width:80px;text-align:center;top:210.0px;font-size:10.5px;line-height:12px;color:#333;font-weight:400">5</div><div class="ab" style="left:-25px;width:80px;text-align:center;top:244.5px;font-size:10.5px;line-height:12px;color:#333;font-weight:400">6</div><div class="ab" style="left:-25px;width:80px;text-align:center;top:267.5px;font-size:10.5px;line-height:12px;color:#333;font-weight:400">7</div><div class="ab" style="left:-25px;width:80px;text-align:center;top:283.5px;font-size:10.5px;line-height:12px;color:#333;font-weight:400">8</div><div class="ab" style="left:-25px;width:80px;text-align:center;top:298.0px;font-size:10.5px;line-height:12px;color:#333;font-weight:400">9</div><div class="ab" style="left:-25px;width:80px;text-align:center;top:316.5px;font-size:10.5px;line-height:12px;color:#333;font-weight:400">10</div><div class="ab" style="left:-25px;width:80px;text-align:center;top:341.0px;font-size:10.5px;line-height:12px;color:#333;font-weight:400">11</div><div class="ab" style="left:-25px;width:80px;text-align:center;top:366.0px;font-size:10.5px;line-height:12px;color:#333;font-weight:400">12</div><div class="ab" style="left:-25px;width:80px;text-align:center;top:396.5px;font-size:10.5px;line-height:12px;color:#333;font-weight:400">13</div><div class="ab" style="left:-25px;width:80px;text-align:center;top:421.25px;font-size:10.5px;line-height:12px;color:#333;font-weight:400">14</div><div class="ab" style="left:-25px;width:80px;text-align:center;top:434.5px;font-size:10.5px;line-height:12px;color:#333;font-weight:400">15</div><div class="ab" style="left:-25px;width:80px;text-align:center;top:447.5px;font-size:10.5px;line-height:12px;color:#333;font-weight:400">16</div><div class="ab" style="left:-25px;width:80px;text-align:center;top:466.25px;font-size:10.5px;line-height:12px;color:#333;font-weight:400">17</div><div class="ab" style="left:-25px;width:80px;text-align:center;top:497.0px;font-size:10.5px;line-height:12px;color:#333;font-weight:400">18</div><div class="ab" style="left:-25px;width:80px;text-align:center;top:521.5px;font-size:10.5px;line-height:12px;color:#333;font-weight:400">19</div><div class="ab" style="left:-25px;width:80px;text-align:center;top:540.5px;font-size:10.5px;line-height:12px;color:#333;font-weight:400">20</div><div class="ab" style="left:-25px;width:80px;text-align:center;top:559.75px;font-size:10.5px;line-height:12px;color:#333;font-weight:400">21</div><div class="ab" style="left:-25px;width:80px;text-align:center;top:572.5px;font-size:10.5px;line-height:12px;color:#333;font-weight:400">22</div><div class="ab" style="left:-25px;width:80px;text-align:center;top:585.5px;font-size:10.5px;line-height:12px;color:#333;font-weight:400">23</div><div class="ab" style="left:-25px;width:80px;text-align:center;top:604.5px;font-size:10.5px;line-height:12px;color:#333;font-weight:400">24</div><div class="ab" style="left:-25px;width:80px;text-align:center;top:629.25px;font-size:10.5px;line-height:12px;color:#333;font-weight:400">25</div><div class="ab" style="left:-25px;width:80px;text-align:center;top:649.625px;font-size:10.5px;line-height:12px;color:#333;font-weight:400">26</div><div class="ab" style="left:-25px;width:80px;text-align:center;top:665.875px;font-size:10.5px;line-height:12px;color:#333;font-weight:400">27</div><div class="ab" style="left:-25px;width:80px;text-align:center;top:682.125px;font-size:10.5px;line-height:12px;color:#333;font-weight:400">28</div><div class="ab" style="left:-25px;width:80px;text-align:center;top:698.375px;font-size:10.5px;line-height:12px;color:#333;font-weight:400">29</div><div class="ab" style="left:-25px;width:80px;text-align:center;top:714.625px;font-size:10.5px;line-height:12px;color:#333;font-weight:400">30</div><div class="ab" style="left:-25px;width:80px;text-align:center;top:730.875px;font-size:10.5px;line-height:12px;color:#333;font-weight:400">31</div><div class="ab" style="left:-25px;width:80px;text-align:center;top:747.125px;font-size:10.5px;line-height:12px;color:#333;font-weight:400">32</div><div class="ab" style="left:-25px;width:80px;text-align:center;top:763.375px;font-size:10.5px;line-height:12px;color:#333;font-weight:400">33</div><div class="ab" style="left:-25px;width:80px;text-align:center;top:779.625px;font-size:10.5px;line-height:12px;color:#333;font-weight:400">34</div><div class="ab" style="left:-25px;width:80px;text-align:center;top:795.875px;font-size:10.5px;line-height:12px;color:#333;font-weight:400">35</div><div class="ab" style="left:-25px;width:80px;text-align:center;top:812.125px;font-size:10.5px;line-height:12px;color:#333;font-weight:400">36</div><div class="ab" style="left:-25px;width:80px;text-align:center;top:828.375px;font-size:10.5px;line-height:12px;color:#333;font-weight:400">37</div><div class="ab" style="left:-25px;width:80px;text-align:center;top:844.625px;font-size:10.5px;line-height:12px;color:#333;font-weight:400">38</div><div class="ab" style="left:-25px;width:80px;text-align:center;top:860.875px;font-size:10.5px;line-height:12px;color:#333;font-weight:400">39</div><div class="ab" style="left:-25px;width:80px;text-align:center;top:877.125px;font-size:10.5px;line-height:12px;color:#333;font-weight:400">40</div><div class="ab" style="left:31px;top:124.2px;font-size:10.4px;line-height:12px;color:#111;font-weight:700">Kategorie ital.</div><div class="ab" style="left:118px;top:124.2px;font-size:10.4px;line-height:12px;color:#111;font-weight:700">Kategorie dt.</div><div class="ab" style="left:189.75px;width:60px;text-align:center;top:124.2px;font-size:10.4px;line-height:12px;color:#111;font-weight:700">#</div><div class="ab" style="left:244px;top:124.2px;font-size:10.4px;line-height:12px;color:#111;font-weight:700">Gericht-Name</div><div class="ab" style="left:31px;top:152.2px;font-size:10.4px;line-height:12px;color:#111;font-weight:400">Antipasti</div><div class="ab" style="left:118px;top:152.2px;font-size:10.4px;line-height:12px;color:#111;font-weight:400">Vorspeisen</div><div class="ab" style="left:189.75px;width:60px;text-align:center;top:152.2px;font-size:10.4px;line-height:12px;color:#111;font-weight:400">1.</div><div class="ab" style="left:244px;top:152.2px;font-size:10.4px;line-height:12px;color:#111;font-weight:400">Caprese di Buffala Mozzarella</div><div class="ab" style="left:189.75px;width:60px;text-align:center;top:168.2px;font-size:10.4px;line-height:12px;color:#111;font-weight:400">2.</div><div class="ab" style="left:244px;top:168.2px;font-size:10.4px;line-height:12px;color:#111;font-weight:400">Prosciutto di Parma con Mozzarella di Buffala</div><div class="ab" style="left:189.75px;width:60px;text-align:center;top:185.2px;font-size:10.4px;line-height:12px;color:#111;font-weight:400">3.</div><div class="ab" style="left:244px;top:185.2px;font-size:10.4px;line-height:12px;color:#111;font-weight:400">Bruschetta mista</div><div class="ab" style="left:189.75px;width:60px;text-align:center;top:224.2px;font-size:10.4px;line-height:12px;color:#111;font-weight:400">4.</div><div class="ab" style="left:244px;top:224.2px;font-size:10.4px;line-height:12px;color:#111;font-weight:400">Carpaccio di Manzo con Rucola, Parmigiano, Pomodorini e Crema di Balsamico</div><div class="ab" style="left:189.75px;width:60px;text-align:center;top:254.2px;font-size:10.4px;line-height:12px;color:#111;font-weight:400">5.</div><div class="ab" style="left:244px;top:254.2px;font-size:10.4px;line-height:12px;color:#111;font-weight:400">Bruschetta al Pomodoro</div><div class="ab" style="left:189.75px;width:60px;text-align:center;top:270.2px;font-size:10.4px;line-height:12px;color:#111;font-weight:400">7.</div><div class="ab" style="left:244px;top:270.2px;font-size:10.4px;line-height:12px;color:#111;font-weight:400">Antipasto misto</div><div class="ab" style="left:244px;top:286.2px;font-size:10.4px;line-height:12px;color:#111;font-weight:400">Alle Vorspeisen mit Brot</div><div class="ab" style="left:31px;top:299.2px;font-size:10.4px;line-height:12px;color:#111;font-weight:400">Insalate</div><div class="ab" style="left:118px;top:299.2px;font-size:10.4px;line-height:12px;color:#111;font-weight:400">Salate</div><div class="ab" style="left:189.75px;width:60px;text-align:center;top:299.2px;font-size:10.4px;line-height:12px;color:#111;font-weight:400">8.</div><div class="ab" style="left:244px;top:299.2px;font-size:10.4px;line-height:12px;color:#111;font-weight:400">Insalata verde</div><div class="ab" style="left:189.75px;width:60px;text-align:center;top:323.2px;font-size:10.4px;line-height:12px;color:#111;font-weight:400">9.</div><div class="ab" style="left:244px;top:323.2px;font-size:10.4px;line-height:12px;color:#111;font-weight:400">Insalata mista</div><div class="ab" style="left:189.75px;width:60px;text-align:center;top:348.2px;font-size:10.4px;line-height:12px;color:#111;font-weight:400">10.</div><div class="ab" style="left:244px;top:348.2px;font-size:10.4px;line-height:12px;color:#111;font-weight:400">Insalata di Rucola, Pomodorini, Olive verdi e Parmigiano</div><div class="ab" style="left:189.75px;width:60px;text-align:center;top:373.2px;font-size:10.4px;line-height:12px;color:#111;font-weight:400">11.</div><div class="ab" style="left:244px;top:373.2px;font-size:10.4px;line-height:12px;color:#111;font-weight:400">Insalata Vegetariana</div><div class="ab" style="left:189.75px;width:60px;text-align:center;top:409.2px;font-size:10.4px;line-height:12px;color:#111;font-weight:400">12.</div><div class="ab" style="left:244px;top:409.2px;font-size:10.4px;line-height:12px;color:#111;font-weight:400">Insalata </div><div class="ab" style="left:244px;top:422.7px;font-size:10.4px;line-height:12px;color:#111;font-weight:400">Extra-Brot (4 Scheiben)</div><div class="ab" style="left:31px;top:435.7px;font-size:10.4px;line-height:12px;color:#111;font-weight:400">Pasta</div><div class="ab" style="left:118px;top:435.7px;font-size:10.4px;line-height:12px;color:#111;font-weight:400">Nudeln</div><div class="ab" style="left:189.75px;width:60px;text-align:center;top:435.7px;font-size:10.4px;line-height:12px;color:#111;font-weight:400">13.</div><div class="ab" style="left:244px;top:435.7px;font-size:10.4px;line-height:12px;color:#111;font-weight:400">Spaghetti Bolognese 1</div><div class="ab" style="left:189.75px;width:60px;text-align:center;top:448.7px;font-size:10.4px;line-height:12px;color:#111;font-weight:400">14.</div><div class="ab" style="left:244px;top:448.7px;font-size:10.4px;line-height:12px;color:#111;font-weight:400">Spaghetti alla Carbonara 1 7</div><div class="ab" style="left:189.75px;width:60px;text-align:center;top:473.2px;font-size:10.4px;line-height:12px;color:#111;font-weight:400">15.</div><div class="ab" style="left:244px;top:473.2px;font-size:10.4px;line-height:12px;color:#111;font-weight:400">Rigatoni Prosciutto, Funghi e Panna 1 7 I J K</div><div class="ab" style="left:189.75px;width:60px;text-align:center;top:510.2px;font-size:10.4px;line-height:12px;color:#111;font-weight:400">16.</div><div class="ab" style="left:244px;top:510.2px;font-size:10.4px;line-height:12px;color:#111;font-weight:400">Rigatoni al Forno</div><div class="ab" style="left:189.75px;width:60px;text-align:center;top:522.2px;font-size:10.4px;line-height:12px;color:#111;font-weight:400">17.</div><div class="ab" style="left:244px;top:522.2px;font-size:10.4px;line-height:12px;color:#111;font-weight:400">Lasagne al Forno</div><div class="ab" style="left:189.75px;width:60px;text-align:center;top:548.2px;font-size:10.4px;line-height:12px;color:#111;font-weight:400">18.</div><div class="ab" style="left:244px;top:548.2px;font-size:10.4px;line-height:12px;color:#111;font-weight:400">Spaghetti Puttanesca</div><div class="ab" style="left:189.75px;width:60px;text-align:center;top:560.7px;font-size:10.4px;line-height:12px;color:#111;font-weight:400">20.</div><div class="ab" style="left:244px;top:560.7px;font-size:10.4px;line-height:12px;color:#111;font-weight:400">Spaghetti alle Vongole Veraci</div><div class="ab" style="left:189.75px;width:60px;text-align:center;top:573.7px;font-size:10.4px;line-height:12px;color:#111;font-weight:400">21.</div><div class="ab" style="left:244px;top:573.7px;font-size:10.4px;line-height:12px;color:#111;font-weight:400">Spaghetti Frutti di Mare</div><div class="ab" style="left:189.75px;width:60px;text-align:center;top:586.7px;font-size:10.4px;line-height:12px;color:#111;font-weight:400">23.</div><div class="ab" style="left:244px;top:586.7px;font-size:10.4px;line-height:12px;color:#111;font-weight:400">Rigatoni al Pomodoro</div><div class="ab" style="left:189.75px;width:60px;text-align:center;top:611.7px;font-size:10.4px;line-height:12px;color:#111;font-weight:400">24.</div><div class="ab" style="left:244px;top:611.7px;font-size:10.4px;line-height:12px;color:#111;font-weight:400">Spaghetti Aglio, Olio e Peperoncino</div><div class="ab" style="left:189.75px;width:60px;text-align:center;top:636.2px;font-size:10.4px;line-height:12px;color:#111;font-weight:400">24.</div><div class="ab" style="left:244px;top:636.2px;font-size:10.4px;line-height:12px;color:#111;font-weight:400">Rigatoni al Arrabiata</div><div class="ab" style="left:593px;top:104px;width:10px;height:773px;background:#fff"></div><div class="ab" style="left:593.5px;top:104px;width:10px;height:4px;background:#a8a8a8"></div><svg class="ab" style="left:321px;top:183px" width="45" height="16"><path d="M2 9c3-6 18-7 34-5.5c5 .5 5 5 0 6c-6 .5-12 .5-16 1c-3 2-6 2.5-9 1.5c-5-.5-10-1-9-3z" fill="#000"/></svg><svg class="ab" style="left:316px;top:264px" width="50" height="18"><path d="M2 9c6-6 25-9 43-5c4 1 5 5 0 7c-12 3-28 5-38 4c-5-1-7-3-5-6z" fill="#000"/></svg><svg class="ab" style="left:279px;top:406px" width="48" height="14"><path d="M3 6c8-4 26-4 40-2c4 1 4 5 0 6c-12 2-28 2-37 1c-5-1-6-3-3-5z" fill="#000"/></svg></div>
</body></html>
